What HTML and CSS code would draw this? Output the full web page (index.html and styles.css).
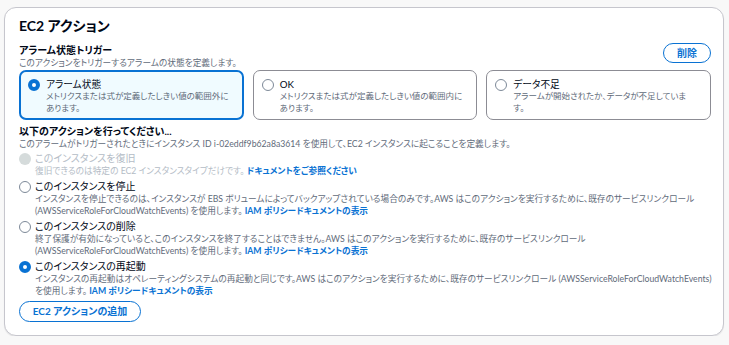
FILE: index.html
```html
<!DOCTYPE html>
<html lang="ja">
<head>
<meta charset="utf-8">
<link rel="stylesheet" href="styles.css">
</head>
<body>
<div class="card">
  <h2 class="title">EC2 アクション</h2>
  <div class="trigger-head">
    <div>
      <div class="label-strong">アラーム状態トリガー</div>
      <div class="desc">このアクションをトリガーするアラームの状態を定義します。</div>
    </div>
    <button class="pill small">削除</button>
  </div>
  <div class="tiles">
    <div class="tile selected">
      <span class="radio checked"></span>
      <div class="tile-text">
        <div class="opt">アラーム状態</div>
        <div class="desc">メトリクスまたは式が定義したしきい値の範囲外にあります。</div>
      </div>
    </div>
    <div class="tile">
      <span class="radio"></span>
      <div class="tile-text">
        <div class="opt">OK</div>
        <div class="desc">メトリクスまたは式が定義したしきい値の範囲内にあります。</div>
      </div>
    </div>
    <div class="tile">
      <span class="radio"></span>
      <div class="tile-text narrow">
        <div class="opt">データ不足</div>
        <div class="desc">アラームが開始されたか、データが不足しています。</div>
      </div>
    </div>
  </div>

  <div class="label-strong sec2">以下のアクションを行ってください...</div>
  <div class="desc">このアラームがトリガーされたときにインスタンス ID i-02eddf9b62a8a3614 を使用して、EC2 インスタンスに起こることを定義します。</div>

  <div class="options">
    <div class="row disabled">
      <span class="radio dis"></span>
      <div class="row-text">
        <div class="opt">このインスタンスを復旧</div>
        <div class="desc">復旧できるのは特定の EC2 インスタンスタイプだけです。 <a class="link">ドキュメントをご参照ください</a></div>
      </div>
    </div>
    <div class="row">
      <span class="radio"></span>
      <div class="row-text">
        <div class="opt">このインスタンスを停止</div>
        <div class="desc">インスタンスを停止できるのは、インスタンスが EBS ボリュームによってバックアップされている場合のみです。AWS はこのアクションを実行するために、既存のサービスリンクロール (AWSServiceRoleForCloudWatchEvents) を使用します。 <a class="link">IAM ポリシードキュメントの表示</a></div>
      </div>
    </div>
    <div class="row">
      <span class="radio"></span>
      <div class="row-text">
        <div class="opt">このインスタンスの削除</div>
        <div class="desc">終了保護が有効になっていると、このインスタンスを終了することはできません。AWS はこのアクションを実行するために、既存のサービスリンクロール (AWSServiceRoleForCloudWatchEvents) を使用します。 <a class="link">IAM ポリシードキュメントの表示</a></div>
      </div>
    </div>
    <div class="row">
      <span class="radio checked"></span>
      <div class="row-text">
        <div class="opt">このインスタンスの再起動</div>
        <div class="desc">インスタンスの再起動はオペレーティングシステムの再起動と同じです。AWS はこのアクションを実行するために、既存のサービスリンクロール (AWSServiceRoleForCloudWatchEvents) を使用します。 <a class="link">IAM ポリシードキュメントの表示</a></div>
      </div>
    </div>
  </div>

  <button class="pill add">EC2 アクションの追加</button>
</div>
</body>
</html>
```

FILE: styles.css
```css
* { box-sizing: border-box; }
html, body { margin: 0; }
body {
  background: #f8f8f8;
  padding: 7px 5px 0 4px;
  font-family: "Lato", "Noto Sans CJK JP", sans-serif;
  font-feature-settings: "palt";
  color: #000716;
}
.card {
  background: #fff;
  border: 1px solid #c6c6cd;
  border-radius: 12px;
  height: 329px;
  padding: 8px 12px 0 14px;
  box-shadow: 0 1px 1px rgba(0,7,22,0.08);
}
.title {
  margin: 0;
  font-size: 14px;
  font-weight: 700;
  line-height: 20px;
}
.trigger-head {
  display: flex;
  justify-content: space-between;
  align-items: flex-end;
  margin-top: 7px;
}
.label-strong {
  font-size: 10px;
  font-weight: 700;
  line-height: 13px;
}
.desc {
  font-size: 8.7px;
  line-height: 11.5px;
  color: #5f6b7a;
}
.pill {
  font-family: inherit;
  font-feature-settings: "palt";
  background: #fff;
  border: 1.5px solid #0972d3;
  border-radius: 12px;
  color: #0972d3;
  font-weight: 700;
  font-size: 10px;
  line-height: 13px;
  cursor: pointer;
}
.small {
  width: 48px;
  height: 20px;
  padding: 0;
  margin-bottom: 5px;
}
.tiles {
  display: grid;
  grid-template-columns: repeat(3, 1fr);
  gap: 9px;
  margin-top: 2px;
}
.tile {
  display: flex;
  gap: 6px;
  height: 50px;
  border: 1px solid #8c8c94;
  border-radius: 7px;
  padding: 7px 10px 0 8px;
}
.tile.selected {
  border: 2px solid #0972d3;
  background: #f0fbff;
  padding: 6px 9px 0 7px;
}
.tile .opt { font-size: 9.7px; }
.tile .desc { font-size: 8.5px; }
.tile-text.narrow { padding-right: 13px; }
.opt {
  font-size: 10px;
  line-height: 13px;
  color: #000716;
}
.radio {
  flex: none;
  width: 12px;
  height: 12px;
  border-radius: 50%;
  border: 1.5px solid #7d8998;
  background: #fff;
  margin-top: 1px;
}
.radio.checked {
  border: 4px solid #0972d3;
}
.radio.dis {
  border: none;
  background: #d5dbdb;
}
.sec2 { margin-top: 5px; }
.options {
  display: flex;
  flex-direction: column;
  gap: 4px;
  margin-top: 2px;
  margin-right: -3px;
}
.row {
  display: flex;
  gap: 4px;
}
.row-text { flex: 1; }
.disabled .opt, .disabled .desc { color: #b4bcc6; }
.disabled .link { color: #0972d3; }
.link {
  color: #0972d3;
  font-weight: 700;
  text-decoration: none;
}
.add {
  margin-top: 5px;
  height: 21px;
  width: 122px;
  padding: 0;
}
```
